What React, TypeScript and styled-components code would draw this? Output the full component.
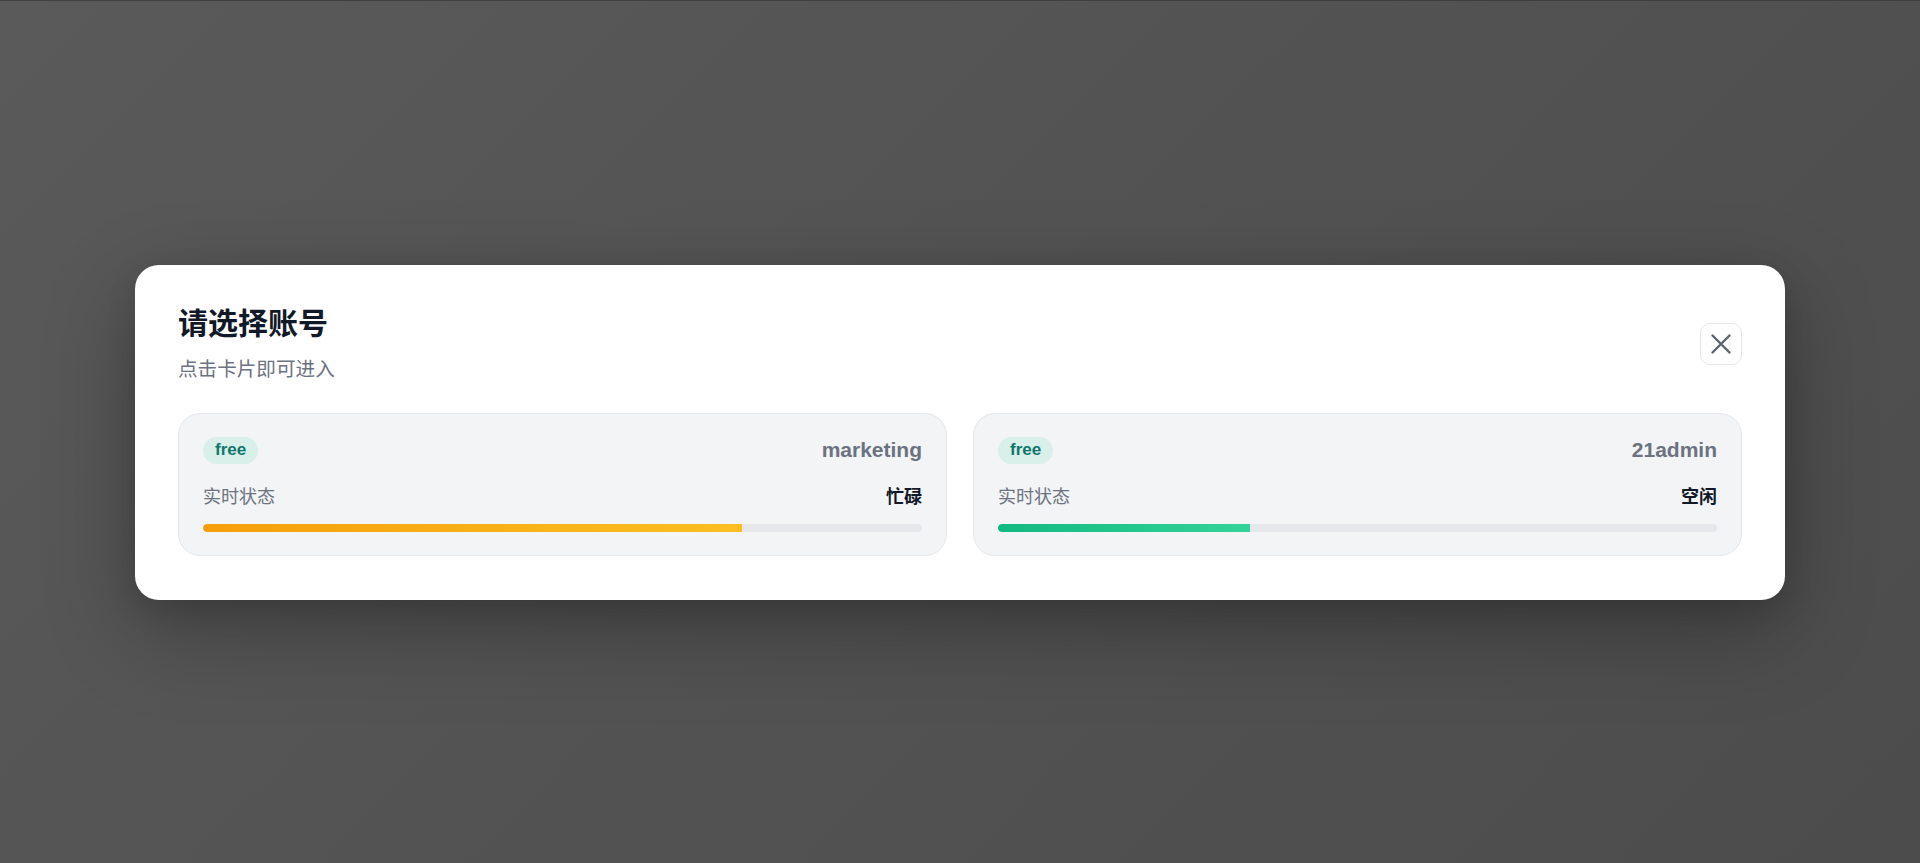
import React from 'react'
import styled, { createGlobalStyle } from 'styled-components'

const GlobalStyle = createGlobalStyle`
  html, body {
    margin: 0;
    padding: 0;
    height: 100%;
  }
  body {
    font-family: "Liberation Sans", "Noto Sans CJK SC", sans-serif;
    background: #515151;
  }
  #root {
    height: 100%;
  }
`

const Overlay = styled('div')`
  align-items: center;
  background: linear-gradient(135deg, #5a5a5a 0%, #535353 45%, #4c4c4c 100%);
  border-top: 1px solid #3f3f3f;
  box-sizing: border-box;
  display: flex;
  height: 100vh;
  justify-content: center;
  width: 100%;
`

const Modal = styled('section')`
  background: #ffffff;
  border-radius: 24px;
  box-shadow: 0 30px 90px rgba(0, 0, 0, 0.28), 0 10px 30px rgba(0, 0, 0, 0.12);
  box-sizing: border-box;
  display: flex;
  flex-direction: column;
  padding: 41px 43px 44px;
  width: 1650px;
`

const Header = styled('header')`
  align-items: center;
  display: flex;
  justify-content: space-between;
  margin-bottom: 31px;
`

const TitleBox = styled('div')`
  display: flex;
  flex-direction: column;
  gap: 14px;
`

const Title = styled('h2')`
  color: #111827;
  font-size: 30px;
  font-weight: 700;
  line-height: 36px;
  margin: 0;
`

const Subtitle = styled('p')`
  color: #6b7280;
  font-size: 19.6px;
  line-height: 26px;
  margin: 0;
`

const CloseButton = styled('button')`
  align-items: center;
  background: #ffffff;
  border: 1px solid #e5e7eb;
  border-radius: 10px;
  box-sizing: border-box;
  color: #5b6473;
  cursor: pointer;
  display: flex;
  height: 42px;
  justify-content: center;
  padding: 0;
  width: 42px;
`

const CardGrid = styled('div')`
  display: grid;
  gap: 26px;
  grid-template-columns: 1fr 1fr;
`

const Card = styled('div')`
  background: #f3f4f6;
  border: 1px solid #e5e7eb;
  border-radius: 22px;
  box-sizing: border-box;
  cursor: pointer;
  display: flex;
  flex-direction: column;
  height: 143px;
  padding: 23px 24px;
`

const TopRow = styled('div')`
  align-items: center;
  display: flex;
  height: 27px;
  justify-content: space-between;
`

const Badge = styled('span')`
  align-items: center;
  background: #d9efe9;
  border-radius: 999px;
  color: #0f766e;
  display: inline-flex;
  font-size: 17px;
  font-weight: 700;
  height: 27px;
  padding: 0 12px;
`

const AccountName = styled('span')`
  color: #6b7280;
  font-size: 21px;
  font-weight: 700;
`

const StatusRow = styled('div')`
  align-items: center;
  display: flex;
  justify-content: space-between;
  line-height: 24px;
  margin-top: 21px;
`

const StatusLabel = styled('span')`
  color: #6b7280;
  font-size: 18px;
`

const StatusValue = styled('span')`
  color: #111827;
  font-size: 18px;
  font-weight: 700;
`

const Track = styled('div')`
  background: #e5e7eb;
  border-radius: 999px;
  height: 8px;
  margin-top: 15px;
  overflow: hidden;
`

const Fill = styled('div')<{ tone: 'busy' | 'idle' }>`
  background: ${(props) =>
    props.tone === 'busy'
      ? 'linear-gradient(90deg, #f59e0b, #fbbf24)'
      : 'linear-gradient(90deg, #10b981, #34d399)'};
  border-radius: 999px 0 0 999px;
  height: 100%;
`

interface IAccount {
  plan: string
  name: string
  status: string
  load: number
  tone: 'busy' | 'idle'
}

const accounts: IAccount[] = [
  { plan: 'free', name: 'marketing', status: '忙碌', load: 75, tone: 'busy' },
  { plan: 'free', name: '21admin', status: '空闲', load: 35, tone: 'idle' },
]

const CloseIcon = () => (
  <svg width="24" height="24" viewBox="0 0 24 24" fill="none" stroke="currentColor" strokeWidth="2.4" strokeLinecap="round">
    <path d="M3.5 3.5l17 17M20.5 3.5l-17 17" />
  </svg>
)

export default function App() {
  return (
    <>
      <GlobalStyle />
      <Overlay>
        <Modal>
          <Header>
            <TitleBox>
              <Title>请选择账号</Title>
              <Subtitle>点击卡片即可进入</Subtitle>
            </TitleBox>
            <CloseButton aria-label="close">
              <CloseIcon />
            </CloseButton>
          </Header>
          <CardGrid>
            {accounts.map((a) => (
              <Card key={a.name}>
                <TopRow>
                  <Badge>{a.plan}</Badge>
                  <AccountName>{a.name}</AccountName>
                </TopRow>
                <StatusRow>
                  <StatusLabel>实时状态</StatusLabel>
                  <StatusValue>{a.status}</StatusValue>
                </StatusRow>
                <Track>
                  <Fill tone={a.tone} style={{ width: `${a.load}%` }} />
                </Track>
              </Card>
            ))}
          </CardGrid>
        </Modal>
      </Overlay>
    </>
  )
}
